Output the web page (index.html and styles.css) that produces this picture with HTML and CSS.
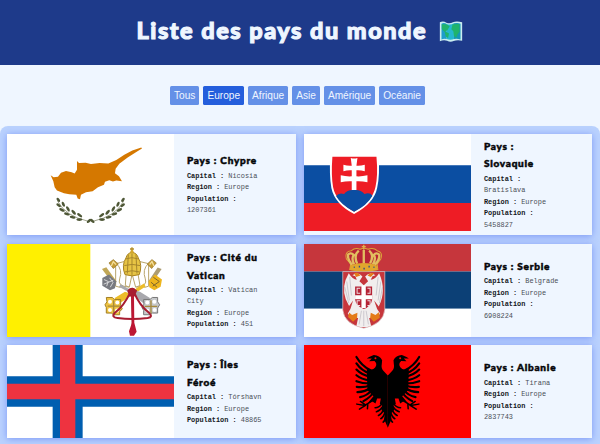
FILE: index.html
```html
<!DOCTYPE html>
<html lang="fr">
<head>
<meta charset="utf-8">
<title>Liste des pays du monde</title>
<link rel="stylesheet" href="styles.css">
</head>
<body>
<header class="header">
  <h1 class="title">Liste des pays du monde</h1>
  <svg class="map" viewBox="0 0 72 64"><path d="M2 4Q12-1 22 5Q32 9 42 4Q52-1 70 4V60Q55 57 44 61Q34 66 24 60Q12 57 2 62Z" fill="#c9edf0"/><path d="M7 8Q15 4 23 9V55Q14 53 7 56Z" fill="#1d9dcc"/><path d="M23 9Q34 13 45 7V55Q34 60 23 55Z" fill="#24b8cf"/><path d="M45 7Q56 4 65 8V56Q54 53 45 55Z" fill="#1498b6"/><path d="M8 10L22 10L32 16L25 28L18 31L30 38L27 52L20 47L17 34L8 24ZM41 10L62 9V33L56 40L52 51L45 46L43 31L37 25Z" fill="#20b36c"/></svg>
</header>
<nav class="filters">
  <button class="filter">Tous</button>
  <button class="filter active">Europe</button>
  <button class="filter">Afrique</button>
  <button class="filter">Asie</button>
  <button class="filter">Amérique</button>
  <button class="filter">Océanie</button>
</nav>
<main class="grid">
  <article class="card">
    <svg class="flag" viewBox="22 42 502 302" preserveAspectRatio="none">
      <path d="M22 42H524V344H22Z" fill="#fff"/>
      <path d="M153 165L162 171L175 170L184 158L199 153L216 156L225 160L232 149V123L238 129L258 128L274 132L300 129L326 130L350 120L374 104L398 91L425 82L427 85L410 96L384 112L359 131L348 146L346 159L358 168L367 183L350 181L340 184L329 180L316 185L313 194L295 201L279 213L259 216L244 224L241 237L234 235L230 224L209 222L193 219L172 211L165 201L161 183Z" fill="#d57800"/>
      <g id="branch">
        <path d="M174 243Q198 288 266 303" fill="none" stroke="#737957" stroke-width="2"/>
        <g fill="#4e5736">
          <ellipse cx="176" cy="239" rx="7" ry="4" transform="rotate(50 176 239)"/><ellipse cx="177" cy="255" rx="8" ry="4" transform="rotate(35 177 255)"/><ellipse cx="191" cy="252" rx="8" ry="4" transform="rotate(65 191 252)"/><ellipse cx="187" cy="269" rx="9" ry="4" transform="rotate(25 187 269)"/><ellipse cx="205" cy="266" rx="9" ry="4" transform="rotate(60 205 266)"/><ellipse cx="202" cy="281" rx="9" ry="4" transform="rotate(15 202 281)"/><ellipse cx="222" cy="276" rx="9" ry="4" transform="rotate(48 222 276)"/><ellipse cx="219" cy="291" rx="9" ry="4" transform="rotate(8 219 291)"/><ellipse cx="240" cy="285" rx="9" ry="4" transform="rotate(35 240 285)"/><ellipse cx="239" cy="298" rx="9" ry="4"/><ellipse cx="268" cy="302" rx="8" ry="4" transform="rotate(-40 268 302)"/>
        </g>
      </g>
      <use href="#branch" transform="translate(546 0) scale(-1 1)"/>
    </svg>
    <div class="info"><h2>Pays : Chypre</h2><p><b>Capital :</b> Nicosia</p><p><b>Region :</b> Europe</p><p><b>Population :</b> 1207361</p></div>
  </article>
  <article class="card">
    <svg class="flag short" viewBox="12 12 501 291" preserveAspectRatio="none">
      <path d="M12 12H513V106H12Z" fill="#fff"/><path d="M12 106H513V219H12Z" fill="#0b4ea2"/><path d="M12 219H513V303H12Z" fill="#ee1c25"/>
      <path d="M91 76H235Q240 135 231 174Q222 220 162 252Q104 222 94 174Q87 135 91 76Z" fill="#fff"/>
      <path d="M97 80H229Q234 135 226 171Q218 213 162 245Q107 214 99 171Q93 135 97 80Z" fill="#ee1c25"/>
      <path d="M108 198Q116 187 132 192Q142 178 162 180Q182 178 193 192Q209 186 217 197Q201 226 162 245Q123 225 108 198Z" fill="#0b4ea2"/>
      <path d="M152 84Q162 87 172 84L169 107Q181 108 194 104V124Q181 120 169 121V139Q185 140 202 136V157Q185 153 169 154V180H155V154Q138 153 122 157V136Q138 140 155 139V121Q142 120 130 124V104Q142 108 155 107Z" fill="#fff"/>
    </svg>
    <div class="info"><h2>Pays : Slovaquie</h2><p><b>Capital :</b> Bratislava</p><p><b>Region :</b> Europe</p><p><b>Population :</b> 5458827</p></div>
  </article>
  <article class="card">
    <svg class="flag" viewBox="22 24 502 280" preserveAspectRatio="none">
      <path d="M22 24H524V304H22Z" fill="#fff"/><path d="M22 24H272V304H22Z" fill="#fff000"/>
      <g fill="none" stroke="#b9a56b" stroke-width="3"><path d="M380 108L377 149L389 154L397 117M414 108L421 149L408 154L398 117M373 77L350 83Q370 101 360 129Q352 151 388 154M421 77L446 83Q427 101 437 129Q445 151 410 154M348 84V151L363 155M447 84V151L434 155" fill="#fff"/></g>
      <path d="M328 81L341 71L356 84L341 98ZM443 84L457 71L470 81L456 98Z" fill="#c49b35" stroke="#94752e" stroke-width="2"/>
      <path d="M335 90L341 77L349 86M450 86L457 77L463 90" fill="none" stroke="#f4df9a" stroke-width="4"/>
      <path d="M307 99L320 94L351 137L341 145Z" fill="#c1a757"/><path d="M474 95L486 99L455 145L446 137Z" fill="#ad9d73"/>
      <path d="M308 126L328 116L350 136L346 157L331 163L308 150Z" fill="#777980"/><path d="M447 136L466 116L487 131L483 153L464 163L449 154Z" fill="#eeb51d"/>
      <path d="M313 131L326 137L321 151M330 126L340 140L332 154M312 145L341 133" fill="none" stroke="#d5d5d7" stroke-width="3"/><path d="M461 124L479 137L459 151M454 139L472 154" fill="none" stroke="#81662b" stroke-width="3"/>
      <path d="M376 116Q365 88 379 66Q383 51 397 49Q412 51 416 66Q429 88 419 116Q397 124 376 116Z" fill="#e7c444" stroke="#a8821e" stroke-width="3"/>
      <path d="M378 69Q397 61 416 69M374 89Q397 82 422 89M376 108Q397 101 419 108M386 56L383 113M397 52V117M409 56L412 113" fill="none" stroke="#a7872c" stroke-width="3"/><path d="M397 34V49M391 39H403" stroke="#b28c25" stroke-width="4"/><circle cx="397" cy="47" r="5" fill="#d3a629"/>
      <path d="M409 158L433 143L438 152L361 202L344 187L376 168L401 177Z" fill="#edbd29"/><path d="M385 158L363 145L358 153L401 177L432 203L452 187L421 168Z" fill="#a8a8ad"/>
      <path d="M320 185H338L344 191H363V210L368 219L360 228V237H342L335 232H320V215L316 207L322 198Z" fill="#efc340" stroke="#a27e25" stroke-width="3"/>
      <path d="M432 191H451L458 185H474V198L480 207L474 217V232H458L452 237H432V224L427 215L433 205Z" fill="#c6c8ca" stroke="#777" stroke-width="3"/>
      <g fill="#fff"><circle cx="331" cy="198" r="6"/><circle cx="353" cy="200" r="6"/><circle cx="331" cy="223" r="6"/><circle cx="352" cy="224" r="6"/><circle cx="443" cy="200" r="6"/><circle cx="464" cy="198" r="6"/><circle cx="443" cy="224" r="6"/><circle cx="465" cy="223" r="6"/></g>
      <path d="M324 211H361M342 193V233M435 212H473M454 193V233" stroke="#a6893c" stroke-width="4"/>
      <path d="M386 165Q397 153 409 165L403 179H391ZM391 171Q374 209 345 232Q334 245 354 247Q397 253 444 247Q461 244 449 232Q419 208 404 171M397 173L399 272" fill="none" stroke="#a71c30" stroke-width="6"/><path d="M395 175H403L404 261L411 288L403 300H391L388 287L397 261Z" fill="#bd1733"/><path d="M386 164L398 156L410 164L403 180H391Z" fill="#a71c30"/>
    </svg>
    <div class="info"><h2>Pays : Cité du Vatican</h2><p><b>Capital :</b> Vatican City</p><p><b>Region :</b> Europe</p><p><b>Population :</b> 451</p></div>
  </article>
  <article class="card">
    <svg class="flag" viewBox="12 24 501 280" preserveAspectRatio="none">
      <path d="M12 24H513V107H12Z" fill="#c6363c"/><path d="M12 107H513V219H12Z" fill="#0c4076"/><path d="M12 219H513V304H12Z" fill="#fff"/>
      <path d="M128 107H254V222Q250 265 191 278Q132 265 128 222Z" fill="#c6363c" stroke="#ded4d6" stroke-width="2"/>
      <path d="M187 122Q174 106 157 118L166 121L170 132Q158 131 146 112Q123 151 137 190L147 211L159 194L151 220L143 233L154 247H174L169 270Q191 280 213 270L207 247H230L240 233L231 220L222 194L236 212Q260 164 237 112Q225 131 212 132L217 121L226 118Q209 106 195 122L204 136L191 148L178 136Z" fill="#f1eeee"/>
      <path d="M149 123L154 179M140 137L148 194M134 154L146 202M234 123L228 179M242 137L234 194M247 154L238 202M184 225L177 266M191 225V271M198 225L205 266" fill="none" stroke="#b9b7bf" stroke-width="2"/>
      <path d="M162 112Q174 107 181 119L168 123ZM202 119Q211 107 222 113L212 123ZM147 230L156 238L172 231L171 247L159 258L144 244ZM212 231L226 238L237 229L239 246L221 258L210 247Z" fill="#e47b18"/>
      <path d="M165 152H216V191Q213 212 191 220Q168 211 165 191Z" fill="#b52335"/><path d="M184 149H197V178H216V190H197V217H184V190H165V178H184Z" fill="#fff"/>
      <path d="M180 157H171V172H180M202 157H210V172H202M180 195H171V209H180M202 195H210V209H202" fill="none" stroke="#f0dfe3" stroke-width="3"/>
      <path d="M149 101L152 84L139 69Q133 45 154 44Q165 34 180 40L191 36L204 40Q220 34 231 44Q249 48 242 69L231 84L233 101Q191 110 149 101Z" fill="#b82535" stroke="#dda837" stroke-width="3"/>
      <path d="M156 87Q142 70 144 56Q151 48 161 57Q153 67 162 85M171 83Q160 58 176 44M191 83V42M210 83Q223 57 207 44M224 87Q240 70 237 56Q229 48 221 57Q229 68 218 85" fill="none" stroke="#e2be60" stroke-width="7"/><path d="M151 88Q191 75 230 88L232 102Q191 109 149 102Z" fill="#e1a72d"/><path d="M161 94H164M176 92H180M190 98H194M205 92H209M220 94H223" stroke="#334e87" stroke-width="5"/><path d="M191 26V41M185 32H197" stroke="#ddb04e" stroke-width="4"/>
    </svg>
    <div class="info"><h2>Pays : Serbie</h2><p><b>Capital :</b> Belgrade</p><p><b>Region :</b> Europe</p><p><b>Population :</b> 6908224</p></div>
  </article>
  <article class="card">
    <svg class="flag" viewBox="22 29 502 280" preserveAspectRatio="none">
      <path d="M22 29H524V309H22Z" fill="#fff"/><path d="M159 29H249V123H524V215H249V309H159V215H22V123H159Z" fill="#005eb0"/><path d="M181 29H227V146H524V192H227V309H181V192H22V146H181Z" fill="#ee3340"/>
    </svg>
    <div class="info"><h2>Pays : Îles Féroé</h2><p><b>Capital :</b> Tórshavn</p><p><b>Region :</b> Europe</p><p><b>Population :</b> 48865</p></div>
  </article>
  <article class="card">
    <svg class="flag" viewBox="12 29 501 280" preserveAspectRatio="none">
      <path d="M12 29H513V309H12Z" fill="#f00"/>
      <g id="eagle">
        <path d="M263 121L251 108Q242 99 245 86L246 75Q239 60 221 59L207 65L200 70L215 70L207 78L223 77Q233 85 225 97Q216 108 203 99L200 103L202 165L220 183L210 195L203 204L216 198L226 205L231 190L242 190L239 207L246 211L244 225L254 235L252 252L263 278Z"/>
        <g fill="none" stroke="#000" stroke-width="6.5" stroke-linecap="round">
          <path d="M211 105Q184 91 169 65M210 115Q184 106 169 84M210 125Q184 119 169 103M210 136Q184 132 169 120M210 145Q186 145 169 138M210 151Q190 158 170 155M214 157Q195 170 172 171M218 162Q202 182 180 186M225 166Q212 186 190 198"/>
          <path d="M221 194L194 211L170 207M196 211L178 222M197 210L181 199M203 207L202 221" stroke-width="4.5"/>
          <path d="M247 204Q237 218 225 218M249 213Q240 227 229 230M252 222Q244 237 235 241M255 231Q250 247 242 251M259 239Q256 256 249 261" stroke-width="5"/>
        </g>
        <circle cx="226" cy="69" r="3" fill="#f00"/>
      </g>
      <use href="#eagle" transform="translate(526 0) scale(-1 1)"/>
    </svg>
    <div class="info"><h2>Pays : Albanie</h2><p><b>Capital :</b> Tirana</p><p><b>Region :</b> Europe</p><p><b>Population :</b> 2837743</p></div>
  </article>
</main>
</body>
</html>
```
FILE: styles.css
```css
* { box-sizing: border-box; }
body { margin: 0; background: #eff6ff; overflow: hidden; font-family: "Liberation Sans", sans-serif; }
.header { height: 64.5px; background: #1e3a8a; display: flex; align-items: center; justify-content: center; gap: 10px; padding: 0 1px 2px 0; }
.title { margin: 0; width: 292px; color: #eff6ff; font: 900 23.5px/30px Lato, sans-serif; letter-spacing: 1.5px; white-space: nowrap; -webkit-text-stroke: 1.1px #eff6ff; padding-bottom: 2px; }
.map { width: 24px; height: 21px; }
.filters { display: flex; justify-content: center; gap: 4px; padding: 21px 5px 21.5px 0; }
.filter { height: 19px; padding: 0 4px; border: 0; border-radius: 1.5px; background: #6490e7; color: #eff6ff; font: 10.15px/19px "Liberation Sans", sans-serif; }
.filter.active { background: #245edc; }
.grid { display: grid; grid-template-columns: 289px 288px; grid-template-rows: 101px 93px 93px; column-gap: 8px; row-gap: 8.5px; height: 330px; padding: 8px 7px; border-radius: 8px; background: #bad2fe; }
.card { display: flex; min-width: 0; background: #eff6ff; box-shadow: 0 1px 7px rgba(65, 95, 240, .5); }
.flag { display: block; flex: none; width: 167.3px; height: 100%; }
.flag.short { height: 97px; }
.info { flex: 1; min-width: 0; display: flex; flex-direction: column; justify-content: center; padding: 0 31px 0 12.7px; }
.info h2 { margin: 0 0 1px; color: #050608; font: 900 10px/17.3px Lato, sans-serif; letter-spacing: .75px; -webkit-text-stroke: .5px #050608; }
.info p { margin: 0; color: #4a4f57; font: 6.9px/11.5px "Liberation Mono", monospace; }
.info b { color: #15181c; }
```
